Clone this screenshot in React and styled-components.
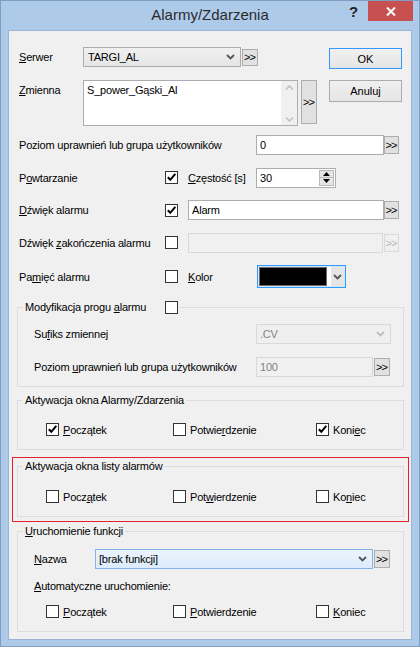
import React from 'react';
import styled, { createGlobalStyle } from 'styled-components';

const GlobalStyle = createGlobalStyle`
  html, body {
    margin: 0;
    padding: 0;
    background: #fff;
  }
  body {
    font-family: "Liberation Sans", Arial, sans-serif;
    font-size: 11px;
    letter-spacing: -0.2px;
    color: #000;
  }
  * {
    box-sizing: border-box;
  }
`;

const Window = styled.div`
  width: 420px;
  height: 647px;
  border: 1px solid #7e9dc3;
  background: #aecae9;
  display: flex;
  flex-direction: column;
`;

const TitleBar = styled.div`
  height: 29px;
  flex: none;
  display: grid;
  grid-template-columns: 1fr auto 1fr;
  align-items: start;
`;

const Title = styled.div`
  grid-column: 2;
  font-size: 15px;
  letter-spacing: 0;
  line-height: 28px;
  color: #2b2b2b;
`;

const TitleButtons = styled.div`
  grid-column: 3;
  justify-self: end;
  display: flex;
  margin-right: 6px;
`;

const HelpButton = styled.div`
  width: 29px;
  height: 20px;
  display: flex;
  align-items: center;
  justify-content: center;
  font-weight: bold;
  font-size: 15px;
  color: #222;
`;

const CloseButton = styled.div`
  width: 45px;
  height: 20px;
  background: #c75050;
  display: flex;
  align-items: center;
  justify-content: center;
`;

const Content = styled.div`
  flex: 1;
  margin: 0 7px 6px;
  background: #f0f0f0;
  border: 1px solid #9cb5d4;
  padding: 16px 7px 0 8px;
  display: flex;
  flex-direction: column;
`;

const TopSection = styled.div`
  display: flex;
  justify-content: space-between;
  align-items: flex-start;
  padding: 0 2px;
`;

const LeftCol = styled.div`
  display: flex;
  flex-direction: column;
  gap: 13px;
`;

const FieldRow = styled.div`
  display: flex;
  align-items: ${(p) => (p.$top ? 'flex-start' : 'center')};
`;

const FieldLabel = styled.div`
  width: ${(p) => p.$w || 64}px;
  flex: none;
  line-height: 20px;
`;

const ButtonCol = styled.div`
  display: flex;
  flex-direction: column;
  gap: 11px;
  padding-top: 1px;
  width: 73px;
`;

const DialogButton = styled.div`
  height: ${(p) => p.$h || 21}px;
  border: 1px solid ${(p) => (p.$default ? '#3399ff' : '#acacac')};
  background: linear-gradient(#f0f0f0, #e5e5e5);
  display: flex;
  align-items: center;
  justify-content: center;
  letter-spacing: 0;
`;

const comboBorder = { normal: '#acacac', hot: '#7eb4ea', disabled: '#d9d9d9' };
const comboBg = {
  normal: 'linear-gradient(#f0f0f0, #e5e5e5)',
  hot: 'linear-gradient(#ecf4fc, #dcecfc)',
  disabled: '#efefef',
};

const Combo = styled.div`
  width: ${(p) => p.$w}px;
  height: 20px;
  flex: none;
  border: 1px solid ${(p) => comboBorder[p.$variant || 'normal']};
  background: ${(p) => comboBg[p.$variant || 'normal']};
  color: ${(p) => (p.$variant === 'disabled' ? '#838383' : '#000')};
  display: flex;
  align-items: center;
  justify-content: space-between;
  padding: 0 5px 0 ${(p) => p.$pl ?? 4}px;
`;

const MoreButton = styled.div`
  width: ${(p) => p.$w || 15}px;
  height: ${(p) => p.$h || 18}px;
  margin-left: ${(p) => p.$ml ?? 1}px;
  flex: none;
  border: 1px solid ${(p) => (p.$disabled ? '#d9d9d9' : '#adadad')};
  background: ${(p) => (p.$disabled ? '#f0f0f0' : '#e1e1e1')};
  color: ${(p) => (p.$disabled ? '#b5b5b5' : '#000')};
  font-size: 11px;
  letter-spacing: -1px;
  display: flex;
  align-items: center;
  justify-content: center;
  padding-right: 1px;
`;

const TextBox = styled.div`
  width: 215px;
  height: 46px;
  border: 1px solid #abadb3;
  background: #fff;
  display: flex;
`;

const TextBoxText = styled.div`
  flex: 1;
  padding: 2px 3px;
  line-height: 14px;
`;

const ScrollTrack = styled.div`
  width: 16px;
  background: #f0f0f0;
  display: flex;
  flex-direction: column;
  justify-content: space-between;
  align-items: center;
  padding: 4px 0 3px;
`;

const MainRows = styled.div`
  display: flex;
  flex-direction: column;
  gap: 12.5px;
  margin-top: 9px;
  padding: 0 2px;
`;

const FormRow = styled.div`
  display: grid;
  grid-template-columns: 146px 23px 68px 1fr;
  height: 20px;
  align-items: center;
`;

const Cell = styled.div`
  grid-column: ${(p) => p.$col || 'auto'};
  display: flex;
  align-items: center;
`;

const LabelCell = styled.div`
  grid-column: ${(p) => p.$col || 'auto'};
  white-space: nowrap;
`;

const TextInput = styled.div`
  width: ${(p) => p.$w}px;
  height: ${(p) => p.$h || 20}px;
  flex: none;
  border: 1px solid ${(p) => (p.$disabled ? '#d9d9d9' : '#abadb3')};
  background: ${(p) => (p.$disabled ? '#f0f0f0' : '#fff')};
  color: ${(p) => (p.$grey ? '#838383' : '#000')};
  padding-left: 3px;
  display: flex;
  align-items: center;
`;

const SpinBox = styled(TextInput)`
  justify-content: space-between;
  padding-right: 1px;
`;

const SpinButtons = styled.div`
  width: 15px;
  height: 16px;
  display: flex;
  flex-direction: column;
`;

const SpinHalf = styled.div`
  flex: 1;
  border: 1px solid #b9b9b9;
  background: #e6e6e6;
  display: flex;
  align-items: center;
  justify-content: center;
  & + & {
    border-top: none;
  }
`;

const ColorCombo = styled.div`
  width: 89px;
  height: 23px;
  margin-left: 1px;
  border: 1px solid #3399ff;
  box-shadow: inset 0 0 0 1px #d4e8fb;
  background: #fff;
  padding: 1px;
  display: flex;
  gap: 4px;
`;

const Swatch = styled.div`
  width: 68px;
  border: 1px solid #6b6b6b;
  background: #000;
`;

const DropButton = styled.div`
  width: 13px;
  background: #e5e5e5;
  display: flex;
  align-items: center;
  justify-content: center;
`;

const Box = styled.div`
  width: 13px;
  height: 13px;
  flex: none;
  border: 1px solid #333;
  background: #fff;
  display: flex;
  align-items: center;
  justify-content: center;
`;

const Group = styled.div`
  border: 1px solid #dcdcdc;
  margin-top: ${(p) => p.$mt || 0}px;
  padding-bottom: ${(p) => p.$pb || 0}px;
  display: flex;
  flex-direction: column;
`;

const Caption = styled.div`
  margin: -9px 0 0 5px;
  padding: 0 2px;
  height: 16px;
  line-height: 16px;
  width: fit-content;
  background: #f0f0f0;
  display: flex;
  align-items: center;
  gap: 4px;
  white-space: nowrap;
`;

const CaptionText = styled.span`
  min-width: ${(p) => p.$min || 0}px;
`;

const SubRow = styled.div`
  display: grid;
  grid-template-columns: ${(p) => p.$cols || '222px 1fr'};
  padding-left: 16px;
  height: ${(p) => p.$h || 20}px;
  margin-top: ${(p) => p.$mt || 0}px;
  align-items: center;
  white-space: nowrap;
`;

const CheckRow = styled.div`
  display: grid;
  grid-template-columns: 127px 143px auto;
  padding-left: 28px;
  height: 15px;
  margin-top: ${(p) => p.$mt || 0}px;
  align-items: center;
`;

const CheckItem = styled.div`
  display: flex;
  align-items: center;
  gap: 4px;
  white-space: nowrap;
`;

const RedFrame = styled.div`
  border: 1px solid #e3222b;
  margin: 7px -5px 0;
  padding: 8px 4px 4px;
`;

const Chevron = ({ color = '#555' }) => (
  <svg width="9" height="6" viewBox="0 0 9 6">
    <path d="M1 1 L4.5 4.5 L8 1" stroke={color} strokeWidth="1.8" fill="none" />
  </svg>
);

const ScrollArrow = ({ up }) => (
  <svg width="9" height="5" viewBox="0 0 9 5">
    <path d={up ? 'M1 4.5 L4.5 1 L8 4.5' : 'M1 0.5 L4.5 4 L8 0.5'} stroke="#c2c2c2" strokeWidth="1.6" fill="none" />
  </svg>
);

const Triangle = ({ up }) => (
  <svg width="7" height="4" viewBox="0 0 7 4">
    <path d={up ? 'M0 4 L3.5 0 L7 4 Z' : 'M0 0 L3.5 4 L7 0 Z'} fill="#000" />
  </svg>
);

function Checkbox({ checked }) {
  return (
    <Box>
      {checked && (
        <svg width="11" height="11" viewBox="0 0 11 11">
          <path d="M1.8 5.2 L4.3 7.8 L9.3 1.8" stroke="#000" strokeWidth="2" fill="none" />
        </svg>
      )}
    </Box>
  );
}

function Check({ checked, children }) {
  return (
    <CheckItem>
      <Checkbox checked={checked} />
      <span>{children}</span>
    </CheckItem>
  );
}

const More = (props) => <MoreButton {...props}>&gt;&gt;</MoreButton>;

export default function App() {
  return (
    <>
      <GlobalStyle />
      <Window>
        <TitleBar>
          <Title>Alarmy/Zdarzenia</Title>
          <TitleButtons>
            <HelpButton>?</HelpButton>
            <CloseButton>
              <svg width="10" height="9" viewBox="0 0 10 9">
                <path d="M1 0.5 L9 8.5 M9 0.5 L1 8.5" stroke="#fff" strokeWidth="2" />
              </svg>
            </CloseButton>
          </TitleButtons>
        </TitleBar>

        <Content>
          <TopSection>
            <LeftCol>
              <FieldRow>
                <FieldLabel><u>S</u>erwer</FieldLabel>
                <Combo $w={158}>
                  <span>TARGI_AL</span>
                  <Chevron />
                </Combo>
                <More $w={16} $h={17} $ml={1} />
              </FieldRow>
              <FieldRow $top>
                <FieldLabel><u>Z</u>mienna</FieldLabel>
                <TextBox>
                  <TextBoxText>S_power_Gąski_Al</TextBoxText>
                  <ScrollTrack>
                    <ScrollArrow up />
                    <ScrollArrow />
                  </ScrollTrack>
                </TextBox>
                <More $w={16} $h={44} $ml={3} />
              </FieldRow>
            </LeftCol>
            <ButtonCol>
              <DialogButton $default>OK</DialogButton>
              <DialogButton $h={22}>Anuluj</DialogButton>
            </ButtonCol>
          </TopSection>

          <MainRows>
            <FormRow>
              <LabelCell $col="1 / 4">Poziom uprawnień lub <u>g</u>rupa użytkowników</LabelCell>
              <Cell $col="4">
                <TextInput $w={128}>0</TextInput>
                <More $ml={0} />
              </Cell>
            </FormRow>
            <FormRow>
              <LabelCell $col="1">P<u>o</u>wtarzanie</LabelCell>
              <Cell $col="2"><Checkbox checked /></Cell>
              <LabelCell $col="3"><u>C</u>zęstość [s]</LabelCell>
              <Cell $col="4">
                <SpinBox $w={80}>
                  <span>30</span>
                  <SpinButtons>
                    <SpinHalf><Triangle up /></SpinHalf>
                    <SpinHalf><Triangle /></SpinHalf>
                  </SpinButtons>
                </SpinBox>
              </Cell>
            </FormRow>
            <FormRow>
              <LabelCell $col="1"><u>D</u>źwięk alarmu</LabelCell>
              <Cell $col="2"><Checkbox checked /></Cell>
              <Cell $col="3 / 5">
                <TextInput $w={196}>Alarm</TextInput>
                <More $ml={0} />
              </Cell>
            </FormRow>
            <FormRow>
              <LabelCell $col="1">Dźwięk <u>z</u>akończenia alarmu</LabelCell>
              <Cell $col="2"><Checkbox /></Cell>
              <Cell $col="3 / 5">
                <TextInput $w={195} $disabled />
                <More $ml={1} $disabled />
              </Cell>
            </FormRow>
            <FormRow>
              <LabelCell $col="1">Pa<u>m</u>ięć alarmu</LabelCell>
              <Cell $col="2"><Checkbox /></Cell>
              <LabelCell $col="3"><u>K</u>olor</LabelCell>
              <Cell $col="4">
                <ColorCombo>
                  <Swatch />
                  <DropButton><Chevron /></DropButton>
                </ColorCombo>
              </Cell>
            </FormRow>
          </MainRows>

          <Group $mt={22} $pb={9}>
            <Caption>
              <CaptionText $min={136}>Modyfikacja progu <u>a</u>larmu</CaptionText>
              <Checkbox />
            </Caption>
            <SubRow $mt={9}>
              <span>Su<u>f</u>iks zmiennej</span>
              <Combo $w={135} $variant="disabled" $pl={3}>
                <span>.CV</span>
                <Chevron color="#bdbdbd" />
              </Combo>
            </SubRow>
            <SubRow $mt={13}>
              <span>Poziom <u>u</u>prawnień lub grupa użytkowników</span>
              <Cell>
                <TextInput $w={117} $disabled $grey>100</TextInput>
                <More $w={16} $ml={1} />
              </Cell>
            </SubRow>
          </Group>

          <Group $mt={13} $pb={12}>
            <Caption>Aktywacja okna Alarmy/Zdarzenia</Caption>
            <CheckRow $mt={14}>
              <Check checked><u>P</u>oczątek</Check>
              <Check>Potwie<u>r</u>dzenie</Check>
              <Check checked>Koni<u>e</u>c</Check>
            </CheckRow>
          </Group>

          <RedFrame>
            <Group $pb={12}>
              <Caption>Aktywacja okna listy alarmów</Caption>
              <CheckRow $mt={15}>
                <Check>Pocz<u>ą</u>tek</Check>
                <Check>Pot<u>w</u>ierdzenie</Check>
                <Check>Ko<u>n</u>iec</Check>
              </CheckRow>
            </Group>
          </RedFrame>

          <Group $mt={9} $pb={12}>
            <Caption><span><u>U</u>ruchomienie funkcji</span></Caption>
            <SubRow $mt={10} $cols="61px 278px auto">
              <span><u>N</u>azwa</span>
              <Combo $w={278} $variant="hot" $pl={3}>
                <span>[brak funkcji]</span>
                <Chevron />
              </Combo>
              <More $w={16} $ml={1} />
            </SubRow>
            <SubRow $mt={9} $h={16} $cols="1fr">
              <span><u>A</u>utomatyczne uruchomienie:</span>
            </SubRow>
            <CheckRow $mt={10}>
              <Check><u>P</u>oczątek</Check>
              <Check><u>P</u>otwierdzenie</Check>
              <Check><u>K</u>oniec</Check>
            </CheckRow>
          </Group>
        </Content>
      </Window>
    </>
  );
}
